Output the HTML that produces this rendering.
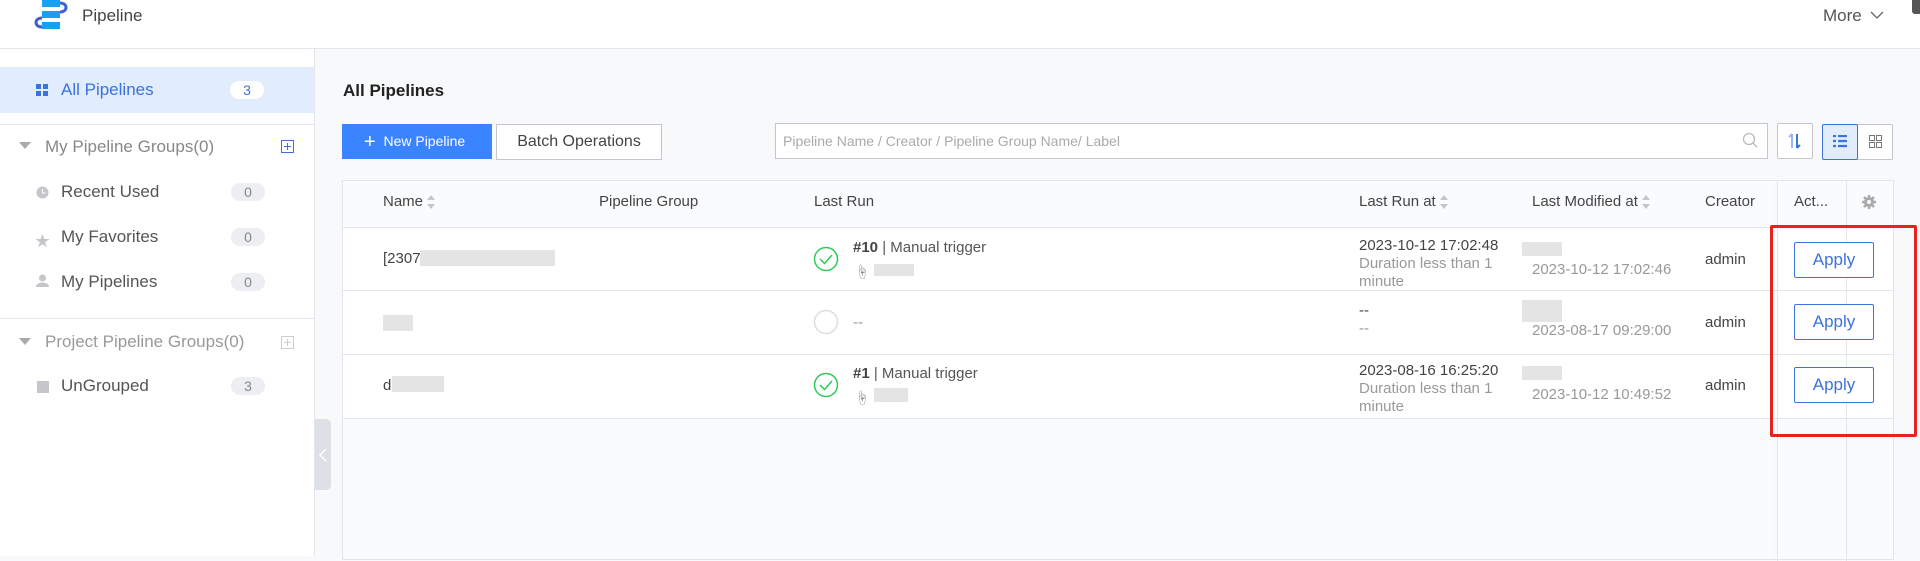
<!DOCTYPE html>
<html><head><meta charset="utf-8"><style>
*{box-sizing:border-box;margin:0;padding:0}
body{width:1920px;height:556px;overflow:hidden;background:#f8f9fb;font-family:"Liberation Sans","Noto Sans CJK SC",sans-serif;color:#333;position:relative}
.a{position:absolute}
.hdr{left:0;top:0;width:1920px;height:49px;background:#fff;border-bottom:1px solid #e3e5ea}
.side{left:0;top:49px;width:315px;height:507px;background:#fff;border-right:1px solid #e3e5ea}
.si{font-size:17px;color:#555}
.badge{width:34px;height:18px;border-radius:9px;background:#eceef2;color:#888;font-size:14px;text-align:center;line-height:18px}
.btn{border:1px solid #c4c6cc;background:#fff;font-size:16px;text-align:center;color:#444}
.th{font-size:15px;color:#444;top:193px}
.td{font-size:15px;color:#444}
.g{color:#999}
.apply{width:80px;height:36px;border:1px solid #3c72db;border-radius:2px;color:#3c72db;font-size:17px;text-align:center;line-height:34px;background:#fff}
.blur{background:#ddd;opacity:.8}
.sort{display:inline-block;width:8px;height:14px;vertical-align:middle;margin-left:4px;position:relative}
.sort:before{content:"";position:absolute;left:0;top:0;border:4px solid transparent;border-bottom:5px solid #c4c6cc;border-top:0}
.sort:after{content:"";position:absolute;left:0;bottom:0;border:4px solid transparent;border-top:5px solid #c4c6cc;border-bottom:0}
</style></head><body>
<div class="a hdr"></div>
<svg class="a" style="left:32px;top:0" width="40" height="32" viewBox="0 0 40 32"><path d="M10 18 C2 18 2 27 10 27" stroke="#3c60d0" stroke-width="3" fill="none"/><path d="M28 3 C36 3 36 12 28 12" stroke="#3c60d0" stroke-width="3" fill="none"/><rect x="10" y="0" width="18" height="7" fill="#1aa0f0"/><rect x="10" y="11" width="18" height="7" fill="#1aa0f0"/><rect x="10" y="22" width="18" height="7" fill="#1aa0f0"/></svg>
<div class="a" style="left:82px;top:6px;font-size:17px;color:#444">Pipeline</div>
<div class="a" style="left:1823px;top:6px;font-size:17px;color:#555">More</div>
<svg class="a" style="left:1870px;top:10px" width="14" height="10"><path d="M1 2 L7 8 L13 2" stroke="#666" fill="none" stroke-width="1.3"/></svg>
<div class="a" style="left:1912px;top:0;width:8px;height:14px;background:#555;border-radius:0 0 0 3px"></div>

<div class="a side"></div>
<div class="a" style="left:0;top:67px;width:314px;height:46px;background:#e1ecfc"></div>
<svg class="a" style="left:36px;top:84px" width="12" height="12"><rect x="0" y="0" width="5" height="5" fill="#3c72db"/><rect x="7" y="0" width="5" height="5" fill="#3c72db"/><rect x="0" y="7" width="5" height="5" fill="#3c72db"/><rect x="7" y="7" width="5" height="5" fill="#3c72db"/></svg>
<div class="a si" style="left:61px;top:80px;color:#3c72db">All Pipelines</div>
<div class="a badge" style="left:230px;top:81px;background:#fff;color:#3c72db">3</div>
<div class="a" style="left:0;top:124px;width:314px;height:1px;background:#e3e5ea"></div>
<svg class="a" style="left:19px;top:142px" width="12" height="8"><path d="M0 0 L12 0 L6 7Z" fill="#aaa"/></svg>
<div class="a si" style="left:45px;top:137px;color:#888">My Pipeline Groups(0)</div>
<svg class="a" style="left:281px;top:140px" width="13" height="13"><rect x=".5" y=".5" width="12" height="12" fill="none" stroke="#3c72db"/><path d="M6.5 3v7M3 6.5h7" stroke="#3c72db"/></svg>
<svg class="a" style="left:36px;top:186px" width="13" height="13"><circle cx="6.5" cy="6.5" r="6" fill="#c4c6cc"/><path d="M6.5 3v4h3" stroke="#fff" fill="none"/></svg>
<div class="a si" style="left:61px;top:182px">Recent Used</div>
<div class="a badge" style="left:231px;top:183px">0</div>
<div class="a" style="left:35px;top:230px;font-size:15px;color:#c4c6cc">★</div>
<div class="a si" style="left:61px;top:227px">My Favorites</div>
<div class="a badge" style="left:231px;top:228px">0</div>
<svg class="a" style="left:36px;top:274px" width="13" height="13"><circle cx="6.5" cy="4" r="3.5" fill="#c4c6cc"/><path d="M0 13 C0 7 13 7 13 13Z" fill="#c4c6cc"/></svg>
<div class="a si" style="left:61px;top:272px">My Pipelines</div>
<div class="a badge" style="left:231px;top:273px">0</div>
<div class="a" style="left:0;top:318px;width:314px;height:1px;background:#e3e5ea"></div>
<svg class="a" style="left:19px;top:338px" width="12" height="8"><path d="M0 0 L12 0 L6 7Z" fill="#aaa"/></svg>
<div class="a si" style="left:45px;top:332px;color:#999">Project Pipeline Groups(0)</div>
<svg class="a" style="left:281px;top:336px" width="13" height="13"><rect x=".5" y=".5" width="12" height="12" fill="none" stroke="#ccc"/><path d="M6.5 3v7M3 6.5h7" stroke="#ccc"/></svg>
<div class="a" style="left:37px;top:381px;width:12px;height:12px;background:#c4c6cc"></div>
<div class="a si" style="left:61px;top:376px">UnGrouped</div>
<div class="a badge" style="left:231px;top:377px">3</div>
<div class="a" style="left:315px;top:419px;width:16px;height:71px;background:#dde0e6;border-radius:0 5px 5px 0"></div>
<svg class="a" style="left:319px;top:448px" width="8" height="14"><path d="M7 1 L1 7 L7 13" stroke="#fff" fill="none" stroke-width="1.5"/></svg>

<div class="a" style="left:343px;top:81px;font-size:17px;font-weight:bold;color:#222">All Pipelines</div>
<div class="a" style="left:342px;top:124px;width:150px;height:35px;background:#3a84ff;color:#fff;font-size:14px;line-height:35px;padding-left:22px"><span style="font-size:20px;vertical-align:-2px">+</span>&nbsp; New Pipeline</div>
<div class="a btn" style="left:496px;top:124px;width:166px;height:36px;line-height:34px">Batch Operations</div>
<div class="a" style="left:775px;top:123px;width:993px;height:36px;background:#fff;border:1px solid #c4c6cc;font-size:14px;color:#aaa;line-height:34px;padding-left:7px">Pipeline Name / Creator / Pipeline Group Name/ Label</div>
<svg class="a" style="left:1742px;top:132px" width="16" height="16"><circle cx="7" cy="7" r="5.5" stroke="#bbb" fill="none" stroke-width="1.3"/><path d="M11 11l4 4" stroke="#bbb" stroke-width="1.3"/></svg>
<div class="a" style="left:1777px;top:123px;width:36px;height:36px;background:#fff;border:1px solid #c4c6cc;border-radius:2px"></div>
<svg class="a" style="left:1787px;top:132px" width="16" height="18"><path d="M5 2v14M5 2L2 5" stroke="#9ab7ef" stroke-width="2" fill="none"/><path d="M10 2v14M10 16l3-3" stroke="#3c72db" stroke-width="2" fill="none"/></svg>
<div class="a" style="left:1822px;top:124px;width:71px;height:36px;background:#fff;border:1px solid #c4c6cc;border-radius:2px"></div>
<div class="a" style="left:1822px;top:124px;width:36px;height:36px;background:#e1ecfc;border:1px solid #3c72db;border-radius:2px"></div>
<svg class="a" style="left:1833px;top:135px" width="14" height="13"><path d="M0 1h3M5 1h9M0 6h3M5 6h9M0 11h3M5 11h9" stroke="#3c72db" stroke-width="2.2"/></svg>
<svg class="a" style="left:1869px;top:135px" width="13" height="13"><rect x=".5" y=".5" width="5" height="5" fill="none" stroke="#777"/><rect x="7.5" y=".5" width="5" height="5" fill="none" stroke="#777"/><rect x=".5" y="7.5" width="5" height="5" fill="none" stroke="#777"/><rect x="7.5" y="7.5" width="5" height="5" fill="none" stroke="#777"/></svg>

<div class="a" style="left:342px;top:180px;width:1552px;height:380px;background:#fafbfd;border:1px solid #e3e5ea"></div>
<div class="a" style="left:343px;top:228px;width:1550px;height:190px;background:#fff"></div>
<div class="a" style="left:343px;top:227px;width:1550px;height:1px;background:#e3e5ea"></div>
<div class="a" style="left:343px;top:290px;width:1550px;height:1px;background:#e3e5ea"></div>
<div class="a" style="left:343px;top:354px;width:1550px;height:1px;background:#e3e5ea"></div>
<div class="a" style="left:343px;top:418px;width:1550px;height:1px;background:#e3e5ea"></div>
<div class="a" style="left:1777px;top:181px;width:1px;height:380px;background:#e3e5ea;box-shadow:-3px 0 6px rgba(0,0,0,.06)"></div>
<div class="a" style="left:1846px;top:181px;width:1px;height:380px;background:#e3e5ea"></div>

<div class="a th" style="left:383px">Name<span class="sort"></span></div>
<div class="a th" style="left:599px">Pipeline Group</div>
<div class="a th" style="left:814px">Last Run</div>
<div class="a th" style="left:1359px">Last Run at<span class="sort"></span></div>
<div class="a th" style="left:1532px">Last Modified at<span class="sort"></span></div>
<div class="a th" style="left:1705px">Creator</div>
<div class="a th" style="left:1794px">Act...</div>
<svg class="a" style="left:1862px;top:195px" width="14" height="14" viewBox="0 0 14 14"><circle cx="7" cy="7" r="5" fill="#aaa"/><path d="M7 0v14M0 7h14M2 2l10 10M12 2L2 12" stroke="#aaa" stroke-width="2.5"/><circle cx="7" cy="7" r="2" fill="#fafbfd"/></svg>

<!-- row 1 -->
<div class="a td" style="left:383px;top:250px">[2307</div>
<div class="a blur" style="left:420px;top:250px;width:135px;height:16px"></div>
<svg class="a" style="left:813px;top:246px" width="26" height="26"><circle cx="13" cy="13" r="11.5" stroke="#2dcb56" fill="none" stroke-width="1.5"/><path d="M7 13l4.5 4.5L19 9" stroke="#2dcb56" fill="none" stroke-width="1.5"/></svg>
<div class="a td" style="left:853px;top:239px;color:#555"><span style="font-weight:600;color:#444">#10</span> | Manual trigger</div>
<div class="a" style="left:855px;top:262px;font-size:14px;color:#888">☝</div>
<div class="a blur" style="left:874px;top:264px;width:40px;height:12px"></div>
<div class="a td" style="left:1359px;top:237px">2023-10-12 17:02:48</div>
<div class="a td g" style="left:1359px;top:255px;line-height:18px;width:150px">Duration less than 1 minute</div>
<div class="a blur" style="left:1522px;top:242px;width:40px;height:14px"></div>
<div class="a td g" style="left:1532px;top:261px">2023-10-12 17:02:46</div>
<div class="a td" style="left:1705px;top:251px">admin</div>
<div class="a apply" style="left:1794px;top:242px">Apply</div>
<!-- row 2 -->
<div class="a blur" style="left:383px;top:315px;width:30px;height:16px"></div>
<svg class="a" style="left:813px;top:309px" width="26" height="26"><circle cx="13" cy="13" r="11.5" stroke="#ddd" fill="none" stroke-width="1.5"/></svg>
<div class="a td g" style="left:853px;top:314px">--</div>
<div class="a td" style="left:1359px;top:302px">--</div>
<div class="a td g" style="left:1359px;top:320px">--</div>
<div class="a blur" style="left:1522px;top:300px;width:40px;height:22px"></div>
<div class="a td g" style="left:1532px;top:322px">2023-08-17 09:29:00</div>
<div class="a td" style="left:1705px;top:314px">admin</div>
<div class="a apply" style="left:1794px;top:304px">Apply</div>
<!-- row 3 -->
<div class="a td" style="left:383px;top:377px">d</div>
<div class="a blur" style="left:392px;top:376px;width:52px;height:16px"></div>
<svg class="a" style="left:813px;top:372px" width="26" height="26"><circle cx="13" cy="13" r="11.5" stroke="#2dcb56" fill="none" stroke-width="1.5"/><path d="M7 13l4.5 4.5L19 9" stroke="#2dcb56" fill="none" stroke-width="1.5"/></svg>
<div class="a td" style="left:853px;top:365px;color:#555"><span style="font-weight:600;color:#444">#1</span> | Manual trigger</div>
<div class="a" style="left:855px;top:388px;font-size:14px;color:#888">☝</div>
<div class="a blur" style="left:874px;top:388px;width:34px;height:14px"></div>
<div class="a td" style="left:1359px;top:362px">2023-08-16 16:25:20</div>
<div class="a td g" style="left:1359px;top:380px;line-height:18px;width:150px">Duration less than 1 minute</div>
<div class="a blur" style="left:1522px;top:366px;width:40px;height:14px"></div>
<div class="a td g" style="left:1532px;top:386px">2023-10-12 10:49:52</div>
<div class="a td" style="left:1705px;top:377px">admin</div>
<div class="a apply" style="left:1794px;top:367px">Apply</div>

<div class="a" style="left:1770px;top:225px;width:147px;height:212px;border:3px solid #e8231f;border-radius:2px"></div>
</body></html>
